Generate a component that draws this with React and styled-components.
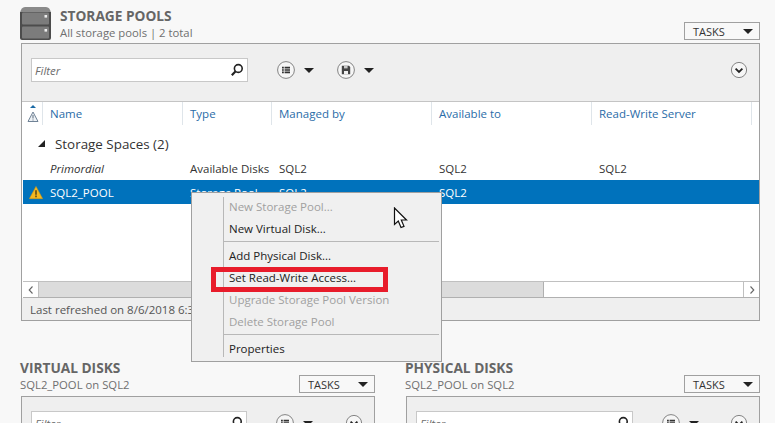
import React from "react";
import styled, { createGlobalStyle } from "styled-components";

const Global = createGlobalStyle`
  html, body { margin: 0; padding: 0; background: #f8f8f8; overflow: hidden; }
  * { box-sizing: border-box; }
`;

const Page = styled.div`
  position: relative;
  width: 775px;
  height: 423px;
  overflow: hidden;
  padding: 7px 15px 0 20px;
  background: #f8f8f8;
  font-family: "Open Sans", "Noto Sans", sans-serif;
  font-size: 11.5px;
  color: #333;
`;

const SectionHead = styled.header`
  display: flex;
  align-items: flex-end;
  height: ${(p) => p.$h}px;
  padding-bottom: 3px;
  gap: 9px;
`;
const HeadText = styled.div`
  flex: 1;
  display: flex;
  flex-direction: column;
  margin-bottom: ${(p) => (p.$drop ? -1 : 0)}px;
`;
const Title = styled.div`
  font-size: 13.7px;
  font-weight: 700;
  line-height: 17px;
  color: #666;
`;
const Subtitle = styled.div`
  font-size: 11.3px;
  line-height: 17px;
  color: #6f6f6f;
`;
const TasksButton = styled.div`
  width: 76px;
  height: 18px;
  border: 1px solid #a0a0a0;
  background: #f8f8f8;
  display: flex;
  align-items: center;
  justify-content: space-between;
  padding: 0 6px 0 8px;
  font-size: 11px;
  color: #333;
`;
const Caret = styled.span`
  display: inline-block;
  width: 0;
  height: 0;
  border-left: 5px solid transparent;
  border-right: 5px solid transparent;
  border-top: 5px solid #222;
`;

const Panel = styled.section`
  margin-left: 1px;
  width: ${(p) => p.$w}px;
  height: ${(p) => p.$h}px;
  border: 1px solid #a0a0a0;
  background: #fff;
  display: flex;
  flex-direction: column;
`;
const Toolbar = styled.div`
  flex: none;
  height: 58px;
  background: #efefef;
  border-bottom: 1px solid #c4c4c4;
  display: flex;
  align-items: flex-start;
  padding: 14px 11px 0 9px;
`;
const FilterBox = styled.div`
  width: ${(p) => p.$w}px;
  height: 24px;
  background: #fff;
  border: 1px solid #c8c8c8;
  display: flex;
  align-items: center;
  justify-content: space-between;
  padding: 0 3px;
  font-style: italic;
  color: #6e6e6e;
  font-size: 11.5px;
`;
const ToolGroup = styled.div`
  display: flex;
  align-items: center;
  height: 24px;
  gap: 9px;
  margin-left: ${(p) => p.$ml}px;
`;
const Spacer = styled.div`
  flex: 1;
`;
const CircleBtn = styled.span`
  width: 18px;
  height: 18px;
  display: block;
  flex: none;
`;

const Table = styled.div`
  flex: 1;
  min-height: 0;
  padding-left: 1px;
  display: flex;
  flex-direction: column;
  overflow: hidden;
`;
const Cols = "20px 140px 89px 160px 160px 160px 1fr";
const HeaderRow = styled.div`
  display: grid;
  grid-template-columns: ${Cols};
  height: 23px;
  flex: none;
`;
const HeaderCell = styled.div`
  display: flex;
  align-items: center;
  padding-left: ${(p) => p.$pl ?? 7}px;
  border-right: 1px solid ${(p) => (p.$last ? "transparent" : "#dfe5ea")};
  color: #2a6ca8;
  font-size: 11.5px;
`;
const GroupRow = styled.div`
  height: 31px;
  flex: none;
  display: flex;
  align-items: center;
  padding-left: 14px;
  padding-top: 6px;
  gap: 9px;
  font-size: 13.4px;
  color: #333;
`;
const Row = styled.div`
  display: grid;
  grid-template-columns: ${Cols};
  height: 24px;
  flex: none;
  align-items: center;
  background: ${(p) => (p.$selected ? "#0072bc" : "transparent")};
  color: ${(p) => (p.$selected ? "#fff" : "#333")};
  font-size: 11.5px;
`;
const Cell = styled.div`
  padding-left: 7px;
  font-style: ${(p) => (p.$italic ? "italic" : "normal")};
  white-space: nowrap;
`;
const IconCell = styled.div`
  display: flex;
  padding-left: 6px;
`;

const ScrollBar = styled.div`
  flex: none;
  height: 17px;
  margin-left: 1px;
  border-top: 1px solid #c0c0c0;
  border-bottom: 1px solid #b0b0b0;
  display: flex;
  background: #fff;
`;
const ScrollBtn = styled.div`
  width: 16px;
  display: flex;
  align-items: center;
  justify-content: center;
  border-${(p) => p.$side}: 1px solid #c0c0c0;
`;
const Thumb = styled.div`
  width: 505px;
  background: #dcdcdc;
  border-right: 1px solid #b0b0b0;
`;
const Status = styled.div`
  flex: none;
  height: 22px;
  background: #efefef;
  display: flex;
  align-items: center;
  padding-left: 8px;
  font-size: 11.5px;
  color: #555;
  white-space: nowrap;
  overflow: hidden;
`;

const Lower = styled.div`
  display: grid;
  grid-template-columns: 385px 1fr;
  margin-top: 39px;
`;
const LowerCol = styled.div`
  display: flex;
  flex-direction: column;
`;
const LowerColHead = styled(SectionHead)`
  width: ${(p) => p.$w}px;
  gap: 0;
`;

const Menu = styled.div`
  position: absolute;
  left: 191px;
  top: 192px;
  width: 251px;
  height: 170px;
  background: #f0f0f0;
  border: 1px solid #a0a0a0;
  padding: 3px 2px 3px 31px;
  font-size: 11.5px;
  color: #222;
  &::before {
    content: "";
    position: absolute;
    left: 31px;
    top: 4px;
    bottom: 4px;
    width: 1px;
    background: #b8b8b8;
  }
`;
const MenuItem = styled.div`
  height: 22px;
  line-height: 21px;
  padding-left: 6px;
  color: ${(p) => (p.$disabled ? "#a0a0a0" : "#222")};
  white-space: nowrap;
`;
const MenuSep = styled.div`
  height: 1px;
  background: #b8b8b8;
  margin: 1px 0 3px;
`;
const Highlight = styled.div`
  position: absolute;
  left: 211px;
  top: 267px;
  width: 177px;
  height: 25px;
  border: 5px solid #e81c2b;
  pointer-events: none;
`;
const Pointer = styled.svg`
  position: absolute;
  left: 393px;
  top: 207px;
`;

const ListIcon = () => (
  <CircleBtn>
    <svg width="18" height="18" viewBox="0 0 18 18">
      <circle cx="9" cy="9" r="8.4" fill="#f6f6f6" stroke="#777" strokeWidth="0.9" />
      <path d="M5 5.8h1.8v1.6H5zM5 8.2h1.8v1.6H5zM5 10.6h1.8v1.6H5z" fill="#333" />
      <path d="M7.6 5.8h5.4v1.6H7.6zM7.6 8.2h5.4v1.6H7.6zM7.6 10.6h5.4v1.6H7.6z" fill="#333" />
    </svg>
  </CircleBtn>
);
const SaveIcon = () => (
  <CircleBtn>
    <svg width="18" height="18" viewBox="0 0 18 18">
      <circle cx="9" cy="9" r="8.4" fill="#f6f6f6" stroke="#777" strokeWidth="0.9" />
      <path d="M4.8 4.8h7.2l1.2 1.2v7.2H4.8z" fill="#444" />
      <path d="M7 4.8h3.6v2.6H7z" fill="#c8c8c8" />
      <path d="M7 10h4v3.2H7z" fill="#f0f0f0" />
    </svg>
  </CircleBtn>
);
const ChevronIcon = () => (
  <CircleBtn>
    <svg width="18" height="18" viewBox="0 0 18 18">
      <circle cx="9" cy="9" r="7.6" fill="#f6f6f6" stroke="#777" strokeWidth="0.9" />
      <path d="M5.6 7.6L9 11l3.4-3.4" fill="none" stroke="#222" strokeWidth="1.8" />
    </svg>
  </CircleBtn>
);
const SearchIcon = () => (
  <svg width="14" height="14" viewBox="0 0 14 14">
    <circle cx="8.3" cy="5.5" r="3.9" fill="none" stroke="#222" strokeWidth="1.6" />
    <path d="M5.4 8.5L1.8 12.2" stroke="#222" strokeWidth="2.2" />
  </svg>
);
const StorageIcon = () => (
  <svg width="31" height="33" viewBox="0 0 31 33">
    <path d="M0 6Q1 0 5 0H26Q30 0 31 6Z" fill="#8a8a8a" />
    <path d="M0 5H31V31Q31 33 29 33H2Q0 33 0 31Z" fill="#4c4c4c" />
    <rect x="2" y="5.5" width="27" height="12" rx="1" fill="#7c7c7c" />
    <rect x="2" y="19.5" width="27" height="12" rx="1" fill="#7c7c7c" />
    <rect x="24.5" y="8" width="2.6" height="2.6" fill="#eee" />
    <rect x="24.5" y="22" width="2.6" height="2.6" fill="#eee" />
  </svg>
);
const WarnHeader = () => (
  <svg width="12" height="20" viewBox="0 0 12 20">
    <path d="M3 4L6 1L9 4Z" fill="#1b6aa5" />
    <path d="M6 8L11 17.5H1Z" fill="#eef2f6" stroke="#6f8296" strokeWidth="1" />
    <path d="M6 11v3.5M6 15.5v1" stroke="#5b6b7c" strokeWidth="1" />
  </svg>
);
const WarnIcon = () => (
  <svg width="16" height="15" viewBox="0 0 16 15">
    <path d="M8 0.5L15.6 14.5H0.4Z" fill="#f5b81f" stroke="#d99a10" strokeWidth="0.6" />
    <path d="M8 4.8v5.2" stroke="#4a3a10" strokeWidth="1.6" />
    <path d="M8 11v1.8" stroke="#4a3a10" strokeWidth="1.6" />
  </svg>
);
const LeftChev = () => (
  <svg width="8" height="10" viewBox="0 0 8 10">
    <path d="M5.5 1.5L2.2 5l3.3 3.5" fill="none" stroke="#666" strokeWidth="1.1" />
  </svg>
);
const RightChev = () => (
  <svg width="8" height="10" viewBox="0 0 8 10">
    <path d="M2.5 1.5L5.8 5 2.5 8.5" fill="none" stroke="#666" strokeWidth="1.1" />
  </svg>
);

const columns = ["Name", "Type", "Managed by", "Available to", "Read-Write Server"];

const FilterBar = ({ filterW, save }) => (
  <Toolbar>
    <FilterBox $w={filterW}>
      <span>Filter</span>
      <SearchIcon />
    </FilterBox>
    <ToolGroup $ml={29}>
      <ListIcon />
      <Caret />
    </ToolGroup>
    {save && (
      <ToolGroup $ml={23}>
        <SaveIcon />
        <Caret />
      </ToolGroup>
    )}
    <Spacer />
    <ToolGroup $ml={0}>
      <ChevronIcon />
    </ToolGroup>
  </Toolbar>
);

const LowerPanel = ({ title, filterW }) => (
  <LowerCol>
    <LowerColHead $h={36} $w={355}>
      <HeadText>
        <Title>{title}</Title>
        <Subtitle>SQL2_POOL on SQL2</Subtitle>
      </HeadText>
      <TasksButton>
        TASKS
        <Caret />
      </TasksButton>
    </LowerColHead>
    <Panel $w={354} $h={100}>
      <FilterBar filterW={filterW} />
    </Panel>
  </LowerCol>
);

export default function App() {
  return (
    <Page>
      <Global />
      <SectionHead $h={36}>
        <StorageIcon />
        <HeadText $drop>
          <Title>STORAGE POOLS</Title>
          <Subtitle>All storage pools | 2 total</Subtitle>
        </HeadText>
        <TasksButton>
          TASKS
          <Caret />
        </TasksButton>
      </SectionHead>
      <Panel $w={739} $h={278}>
        <FilterBar filterW={217} save />
        <Table>
          <HeaderRow>
            <HeaderCell $pl={4}>
              <WarnHeader />
            </HeaderCell>
            {columns.map((c) => (
              <HeaderCell key={c}>{c}</HeaderCell>
            ))}
            <HeaderCell $last />
          </HeaderRow>
          <GroupRow>
            <svg width="9" height="9" viewBox="0 0 9 9">
              <path d="M8 1V8H1Z" fill="#222" />
            </svg>
            Storage Spaces (2)
          </GroupRow>
          <Row>
            <span />
            <Cell $italic>Primordial</Cell>
            <Cell>Available Disks</Cell>
            <Cell>SQL2</Cell>
            <Cell>SQL2</Cell>
            <Cell>SQL2</Cell>
          </Row>
          <Row $selected>
            <IconCell>
              <WarnIcon />
            </IconCell>
            <Cell>SQL2_POOL</Cell>
            <Cell>Storage Pool</Cell>
            <Cell>SQL2</Cell>
            <Cell>SQL2</Cell>
            <Cell />
          </Row>
        </Table>
        <ScrollBar>
          <ScrollBtn $side="right">
            <LeftChev />
          </ScrollBtn>
          <Thumb />
          <Spacer />
          <ScrollBtn $side="left">
            <RightChev />
          </ScrollBtn>
        </ScrollBar>
        <Status>Last refreshed on 8/6/2018 6:30:12 PM</Status>
      </Panel>
      <Lower>
        <LowerPanel title="VIRTUAL DISKS" filterW={216} />
        <LowerPanel title="PHYSICAL DISKS" filterW={217} />
      </Lower>
      <Menu>
        <MenuItem $disabled>New Storage Pool...</MenuItem>
        <MenuItem>New Virtual Disk...</MenuItem>
        <MenuSep />
        <MenuItem>Add Physical Disk...</MenuItem>
        <MenuItem>Set Read-Write Access...</MenuItem>
        <MenuItem $disabled>Upgrade Storage Pool Version</MenuItem>
        <MenuItem $disabled>Delete Storage Pool</MenuItem>
        <MenuSep />
        <MenuItem>Properties</MenuItem>
      </Menu>
      <Highlight />
      <Pointer width="16" height="23" viewBox="0 0 16 23">
        <path d="M1.5 1V17.5L5.3 14L8 20.5L11 19.3L8.3 13H13.5Z" fill="#fff" stroke="#111" strokeWidth="1.2" />
      </Pointer>
    </Page>
  );
}
